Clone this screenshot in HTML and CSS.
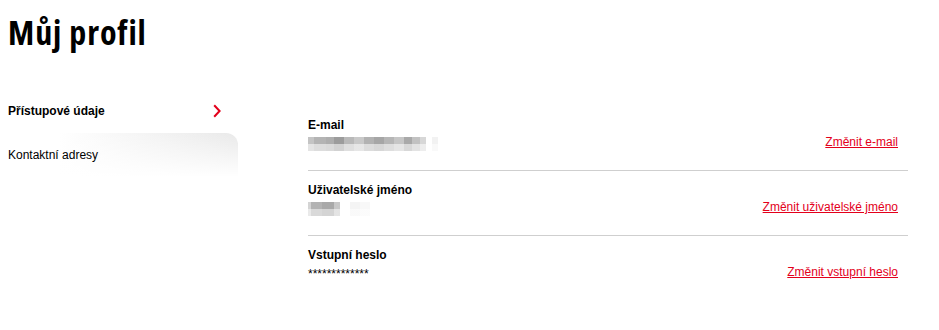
FILE: index.html
```html
<!DOCTYPE html>
<html lang="cs">
<head>
<meta charset="utf-8">
<title>Můj profil</title>
<link rel="stylesheet" href="styles.css">
</head>
<body>
<div class="page">
  <h1 class="title">Můj profil</h1>
  <div class="layout">
    <nav class="sidebar">
      <a class="nav-item active" href="#">
        <span>Přístupové údaje</span>
        <svg class="chev" width="8" height="14" viewBox="0 0 8 14"><polyline points="1.2,1.2 6.6,7 1.2,12.8" fill="none" stroke="#e3001b" stroke-width="2"/></svg>
      </a>
      <a class="nav-item tab" href="#"><span>Kontaktní adresy</span></a>
    </nav>
    <main class="content">
      <div class="row">
        <div class="field">
          <div class="label">E-mail</div>
          <div class="value">
            <span class="blur blur-email"></span>
          </div>
        </div>
        <a class="change" href="#">Změnit e-mail</a>
      </div>
      <div class="row">
        <div class="field">
          <div class="label">Uživatelské jméno</div>
          <div class="value">
            <span class="blur blur-user"></span>
          </div>
        </div>
        <a class="change" href="#">Změnit uživatelské jméno</a>
      </div>
      <div class="row">
        <div class="field">
          <div class="label">Vstupní heslo</div>
          <div class="value pw">*************</div>
        </div>
        <a class="change" href="#">Změnit vstupní heslo</a>
      </div>
    </main>
  </div>
</div>
</body>
</html>
```
FILE: styles.css
```css
html, body {
  margin: 0;
  padding: 0;
  background: #fff;
}
body {
  font-family: "Liberation Sans", Arial, sans-serif;
  font-size: 12px;
  color: #000;
}
.page {
  width: 939px;
}
.title {
  margin: 0;
  padding: 12px 0 0 8px;
  font-family: "Open Sans", "DejaVu Sans", sans-serif;
  font-stretch: 75%;
  font-weight: 700;
  font-size: 34px;
  line-height: 40px;
  letter-spacing: 0.9px;
}
.layout {
  display: flex;
  margin-top: 36px;
}
.sidebar {
  width: 238px;
  flex: none;
  display: flex;
  flex-direction: column;
}
.nav-item {
  display: flex;
  align-items: center;
  justify-content: space-between;
  height: 45px;
  padding: 0 17px 0 8px;
  color: #000;
  text-decoration: none;
  line-height: 16px;
}
.nav-item.active {
  font-weight: bold;
}
.nav-item.tab {
  height: 44px;
  border-top-right-radius: 12px;
  background:
    linear-gradient(to bottom, rgba(255,255,255,0) 0%, #fff 100%),
    linear-gradient(to right, #fff 25%, #e9e9e9 100%);
}
.chev {
  display: block;
}
.content {
  margin-left: 70px;
  margin-top: 18px;
  width: 600px;
}
.row {
  display: flex;
  justify-content: space-between;
  align-items: flex-end;
  padding: 11px 10px 17px 0;
  border-bottom: 1px solid #cfcfcf;
}
.row:last-child {
  border-bottom: none;
}
.label {
  font-weight: bold;
  line-height: 16px;
}
.value {
  margin-top: 4px;
  height: 16px;
  line-height: 16px;
}
.pw {
  font-size: 12px;
  line-height: 14px;
}
.blur {
  display: block;
  height: 14px;
  margin-top: 1px;
}
.blur-email {
  width: 134px;
  background:
    linear-gradient(to bottom, rgba(255,255,255,0) 0 50%, rgba(255,255,255,0.55) 50% 100%),
    linear-gradient(to right,
      #c4c4c4 0 6px, #b4b4b4 6px 18px, #aeaeae 18px 26px, #9c9c9c 26px 36px,
      #b9b9b9 36px 46px, #c9c9c9 46px 56px, #b2b2b2 56px 66px, #a6a6a6 66px 76px,
      #b6b6b6 76px 86px, #c6c6c6 86px 96px, #a9a9a9 96px 104px, #c2c2c2 104px 112px,
      #d7d7d7 112px 118px, #fff 118px 124px, #f2f2f2 124px 130px, #fff 130px 134px);
}
.blur-user {
  width: 70px;
  background:
    linear-gradient(to bottom, rgba(255,255,255,0) 0 50%, rgba(255,255,255,0.5) 50% 100%),
    linear-gradient(to right,
      #d4d4d4 0 3px, #b3b3b3 3px 14px, #a9a9a9 14px 26px, #c8c8c8 26px 32px,
      #fff 32px 42px, #f4f4f4 42px 52px, #f8f8f8 52px 62px, #fff 62px 70px);
}
.change {
  color: #e3001b;
  text-decoration: underline;
  line-height: 16px;
  margin-bottom: 3px;
}
```
